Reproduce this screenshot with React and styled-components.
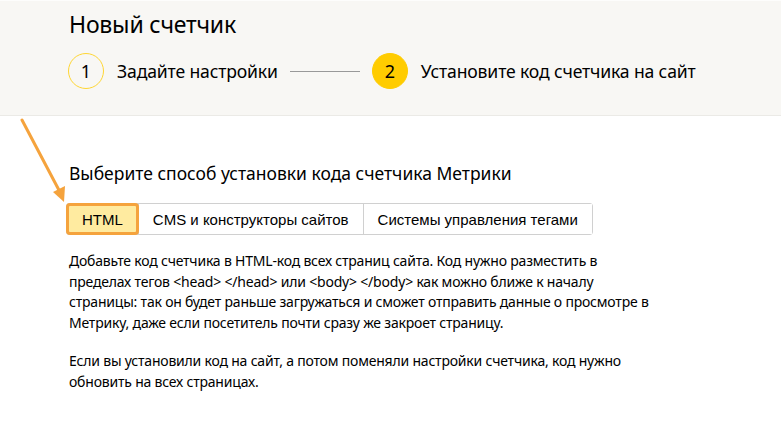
import React from "react";
import styled, { createGlobalStyle } from "styled-components";

const GlobalStyle = createGlobalStyle`
  body {
    margin: 0;
    background: #fff;
    font-family: "Noto Sans", "Liberation Sans", sans-serif;
    color: #000;
  }
`;

const steps = [
  { num: 1, label: "Задайте настройки", active: false },
  { num: 2, label: "Установите код счетчика на сайт", active: true },
];

const tabs = ["HTML", "CMS и конструкторы сайтов", "Системы управления тегами"];

const App = () => {
  const [tab, setTab] = React.useState(0);
  return (
    <>
      <GlobalStyle />
      <Page>
        <Header>
          <Title>Новый счетчик</Title>
          <Steps>
            {steps.map((s, i) => (
              <React.Fragment key={s.num}>
                {i > 0 && <StepLine />}
                <Step>
                  <Circle active={s.active}>{s.num}</Circle>
                  <StepLabel>{s.label}</StepLabel>
                </Step>
              </React.Fragment>
            ))}
          </Steps>
        </Header>
        <Content>
          <Arrow width="50" height="90" viewBox="0 0 50 90">
            <line x1="3" y1="2" x2="42" y2="76" stroke="#f5a33d" strokeWidth="3" strokeLinecap="round" />
            <polygon points="34,74 46,68 45,84" fill="#f5a33d" />
          </Arrow>
          <SectionTitle>Выберите способ установки кода счетчика Метрики</SectionTitle>
          <Tabs>
            {tabs.map((t, i) => (
              <Tab key={t} selected={tab === i} onClick={() => setTab(i)}>
                {t}
              </Tab>
            ))}
          </Tabs>
          <Text>
            Добавьте код счетчика в HTML-код всех страниц сайта. Код нужно разместить в
            <br />
            пределах тегов &lt;head&gt; &lt;/head&gt; или &lt;body&gt; &lt;/body&gt; как можно
            ближе к началу
            <br />
            страницы: так он будет раньше загружаться и сможет отправить данные о просмотре в
            <br />
            Метрику, даже если посетитель почти сразу же закроет страницу.
          </Text>
          <Text>
            Если вы установили код на сайт, а потом поменяли настройки счетчика, код нужно
            <br />
            обновить на всех страницах.
          </Text>
        </Content>
      </Page>
    </>
  );
};

const Page = styled.div`
  width: 781px;
  min-height: 430px;
`;

const Header = styled.div`
  background: #f8f7f4;
  border-top: 1px solid #fdfdfc;
  border-bottom: 1px solid #ebeae6;
  height: 116px;
  box-sizing: border-box;
  padding: 8px 0 0 69px;
`;

const Title = styled.h1`
  margin: 0;
  font-size: 23px;
  font-weight: 400;
  line-height: 30px;
  letter-spacing: -0.2px;
`;

const Steps = styled.div`
  display: flex;
  align-items: center;
  margin-top: 14px;
  margin-left: -1px;
`;

const Step = styled.div`
  display: flex;
  align-items: center;
  gap: 13px;
`;

const Circle = styled.div`
  width: 36px;
  height: 36px;
  box-sizing: border-box;
  border-radius: 50%;
  display: flex;
  align-items: center;
  justify-content: center;
  font-size: 18px;
  border: 1px solid #ffd633;
  background: ${(p) => (p.active ? "#ffcc00" : "transparent")};
  border-color: ${(p) => (p.active ? "#ffcc00" : "#ffd633")};
`;

const StepLabel = styled.span`
  font-size: 17.6px;
  letter-spacing: -0.15px;
`;

const StepLine = styled.div`
  width: 70px;
  height: 1px;
  background: #999;
  margin: 0 12px 0 12px;
`;

const Content = styled.div`
  position: relative;
  padding: 45px 0 0 69px;
`;

const Arrow = styled.svg`
  position: absolute;
  left: 19px;
  top: 2px;
`;

const SectionTitle = styled.h2`
  margin: 0;
  font-size: 17.5px;
  font-weight: 400;
  line-height: 24px;
  letter-spacing: 0;
`;

const Tabs = styled.div`
  display: inline-flex;
  margin: 18px 0 0 -3px;
  border: 1px solid #d0d0d0;
  border-radius: 3px;
  height: 32px;
  box-sizing: border-box;
`;

const Tab = styled.button`
  font-family: "Liberation Sans", Arial, sans-serif;
  font-size: 15px;
  color: #000;
  background: ${(p) => (p.selected ? "#ffeba0" : "#fff")};
  border: none;
  border-left: 1px solid #d0d0d0;
  padding: 0 14px;
  cursor: pointer;
  position: relative;
  &:first-child {
    border-left: none;
    border-radius: 2px 0 0 2px;
    padding: 0 15px;
  }
  ${(p) =>
    p.selected &&
    `
    outline: 3px solid #f5a33d;
    outline-offset: -2px;
    border-radius: 3px !important;
    z-index: 1;
  `}
`;

const Text = styled.p`
  margin: 16px 0 0;
  width: 650px;
  font-size: 14px;
  line-height: 20.5px;
  letter-spacing: -0.2px;
  white-space: nowrap;
  & + & {
    margin-top: 18px;
  }
`;

export default App;
